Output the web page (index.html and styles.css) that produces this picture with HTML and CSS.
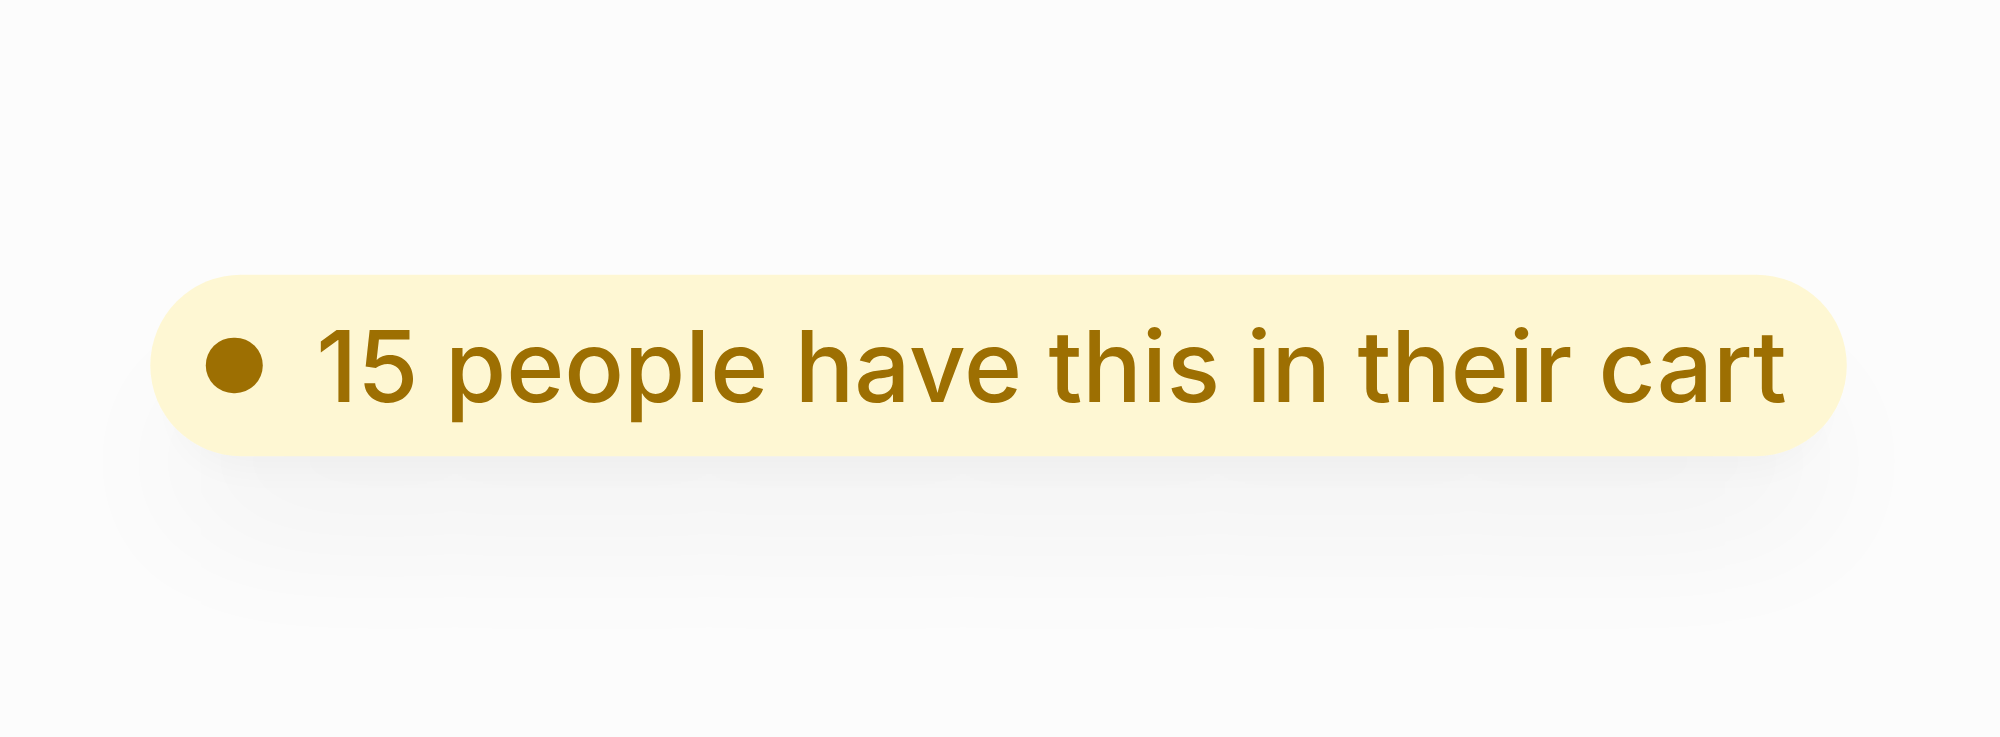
FILE: index.html
```html
<!DOCTYPE html>
<html lang="en">
<head>
<meta charset="utf-8">
<title>Cart badge</title>
<link rel="stylesheet" href="styles.css">
</head>
<body>
<main class="stage">
  <div class="badge">
    <span class="badge-dot"></span>
    <span class="badge-text">15 people have this in their cart</span>
  </div>
</main>
</body>
</html>
```

FILE: styles.css
```css
html, body {
  margin: 0;
  padding: 0;
  background: #fcfcfc;
}
.stage {
  width: 2000px;
  height: 737px;
  display: flex;
  align-items: center;
  justify-content: center;
}
/* badge is laid out at 2/3 size and scaled up 1.5x as one layer */
.badge {
  display: inline-flex;
  align-items: center;
  gap: 36px;
  height: 121.33px;
  box-sizing: border-box;
  margin: 0 4px 5px 0;
  padding: 0 40px 0 37.33px;
  border-radius: 61px;
  background: #fef7d3;
  color: #9d6f02;
  font-family: Inter, "Noto Sans", sans-serif;
  font-size: 66px;
  font-weight: 500;
  line-height: 1;
  transform: scale(1.5);
  transform-origin: 50% 50%;
  will-change: transform;
  box-shadow: 0 64px 100px -14px rgba(0, 0, 0, 0.045), 0 26px 34px -20px rgba(0, 0, 0, 0.045);
}
.badge-dot {
  width: 37.33px;
  height: 37.33px;
  border-radius: 50%;
  background: #9d6f02;
  flex: none;
}
.badge-text {
  white-space: nowrap;
}
```
